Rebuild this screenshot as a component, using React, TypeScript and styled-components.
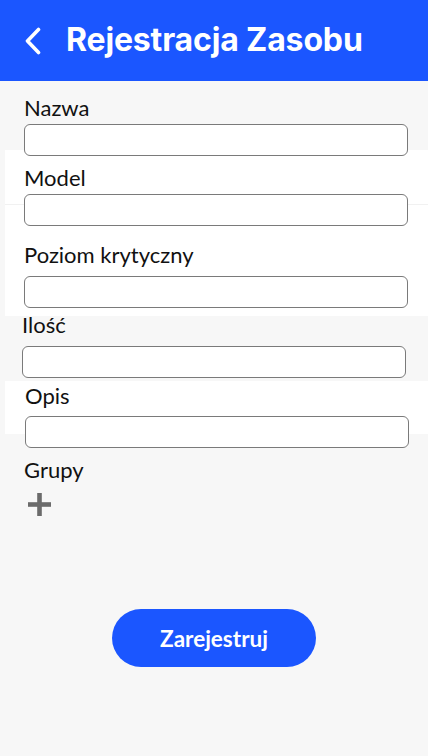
import React from "react";
import styled, { createGlobalStyle } from "styled-components";

const GlobalStyle = createGlobalStyle`
  html, body { margin: 0; padding: 0; background: #f7f7f7; }
  body { font-family: "Lato", "Noto Sans", sans-serif; }
  * { box-sizing: border-box; }
`;

const BLUE = "#1b56ff";

const Page = styled.div`
  width: 428px;
  min-height: 756px;
  background: #f7f7f7;
  display: flex;
  flex-direction: column;
`;

const Header = styled.header`
  height: 81px;
  background: ${BLUE};
  display: flex;
  align-items: center;
  padding-left: 22px;
  gap: 22px;
`;

const BackButton = styled.button`
  border: none;
  background: none;
  padding: 0;
  width: 22px;
  height: 30px;
  display: flex;
  align-items: center;
  justify-content: center;
  cursor: pointer;
`;

const Title = styled.h1`
  margin: 0;
  color: #ffffff;
  font-family: "Inter", "Noto Sans", sans-serif;
  font-weight: 700;
  font-size: 32px;
  letter-spacing: -0.15px;
  line-height: 1;
  padding-bottom: 2px;
`;

const FormArea = styled.main`
  flex: 1;
  display: flex;
  flex-direction: column;
  padding-top: 15px;
  background-color: #f7f7f7;
  background-image:
    linear-gradient(#f1f1f1, #f1f1f1),
    linear-gradient(#ffffff, #ffffff),
    linear-gradient(#ffffff, #ffffff);
  background-repeat: no-repeat;
  background-position: 5px 123px, 5px 69px, 5px 300px;
  background-size: calc(100% - 5px) 1px, calc(100% - 5px) 166px, calc(100% - 5px) 53px;
`;

const Field = styled.div<{ $x: number; $top: number; $gap: number }>`
  display: flex;
  flex-direction: column;
  gap: ${(p) => p.$gap}px;
  margin-top: ${(p) => p.$top}px;
  margin-left: ${(p) => p.$x}px;
  width: 384px;
`;

const Label = styled.label`
  font-family: "Lato", "Noto Sans", sans-serif;
  font-size: 22px;
  line-height: 24px;
  color: #111111;
`;

const Input = styled.input`
  height: 32px;
  width: 100%;
  border: 1px solid #7a7a7a;
  border-radius: 6px;
  background: #ffffff;
  font-family: "Lato", sans-serif;
  font-size: 16px;
  padding: 0 8px;
  outline: none;
`;

const AddButton = styled.button`
  border: none;
  background: none;
  padding: 0;
  margin-top: 11px;
  margin-left: 4px;
  width: 23px;
  height: 23px;
  display: flex;
  cursor: pointer;
`;

const SubmitRow = styled.div`
  display: flex;
  justify-content: center;
  margin-top: 93px;
`;

const SubmitButton = styled.button`
  width: 204px;
  height: 58px;
  border: none;
  border-radius: 29px;
  background: ${BLUE};
  color: #ffffff;
  font-family: "Lato", "Noto Sans", sans-serif;
  font-weight: 700;
  font-size: 22.5px;
  cursor: pointer;
`;

const fields = [
  { label: "Nazwa", x: 24, top: 0, gap: 4 },
  { label: "Model", x: 24, top: 10, gap: 4 },
  { label: "Poziom krytyczny", x: 24, top: 17, gap: 9 },
  { label: "Ilość", x: 22, top: 5, gap: 9 },
  { label: "Opis", x: 25, top: 6, gap: 8 },
];

export default function App() {
  return (
    <>
      <GlobalStyle />
      <Page>
        <Header>
          <BackButton aria-label="Wstecz">
            <svg width="18" height="28" viewBox="0 0 18 28">
              <path
                d="M14.5 2.5 L3.5 14 L14.5 25.5"
                fill="none"
                stroke="#ffffff"
                strokeWidth="3.6"
                strokeLinecap="round"
                strokeLinejoin="round"
              />
            </svg>
          </BackButton>
          <Title>Rejestracja Zasobu</Title>
        </Header>
        <FormArea>
          {fields.map((f) => (
            <Field key={f.label} $x={f.x} $top={f.top} $gap={f.gap}>
              <Label>{f.label}</Label>
              <Input />
            </Field>
          ))}
          <Field $x={24} $top={10} $gap={0}>
            <Label>Grupy</Label>
            <AddButton aria-label="Dodaj grupę">
              <svg width="23" height="23" viewBox="0 0 23 23">
                <rect x="9.2" y="0" width="4.6" height="23" fill="#6b6b6b" />
                <rect x="0" y="9.2" width="23" height="4.6" fill="#6b6b6b" />
              </svg>
            </AddButton>
          </Field>
          <SubmitRow>
            <SubmitButton>Zarejestruj</SubmitButton>
          </SubmitRow>
        </FormArea>
      </Page>
    </>
  );
}
